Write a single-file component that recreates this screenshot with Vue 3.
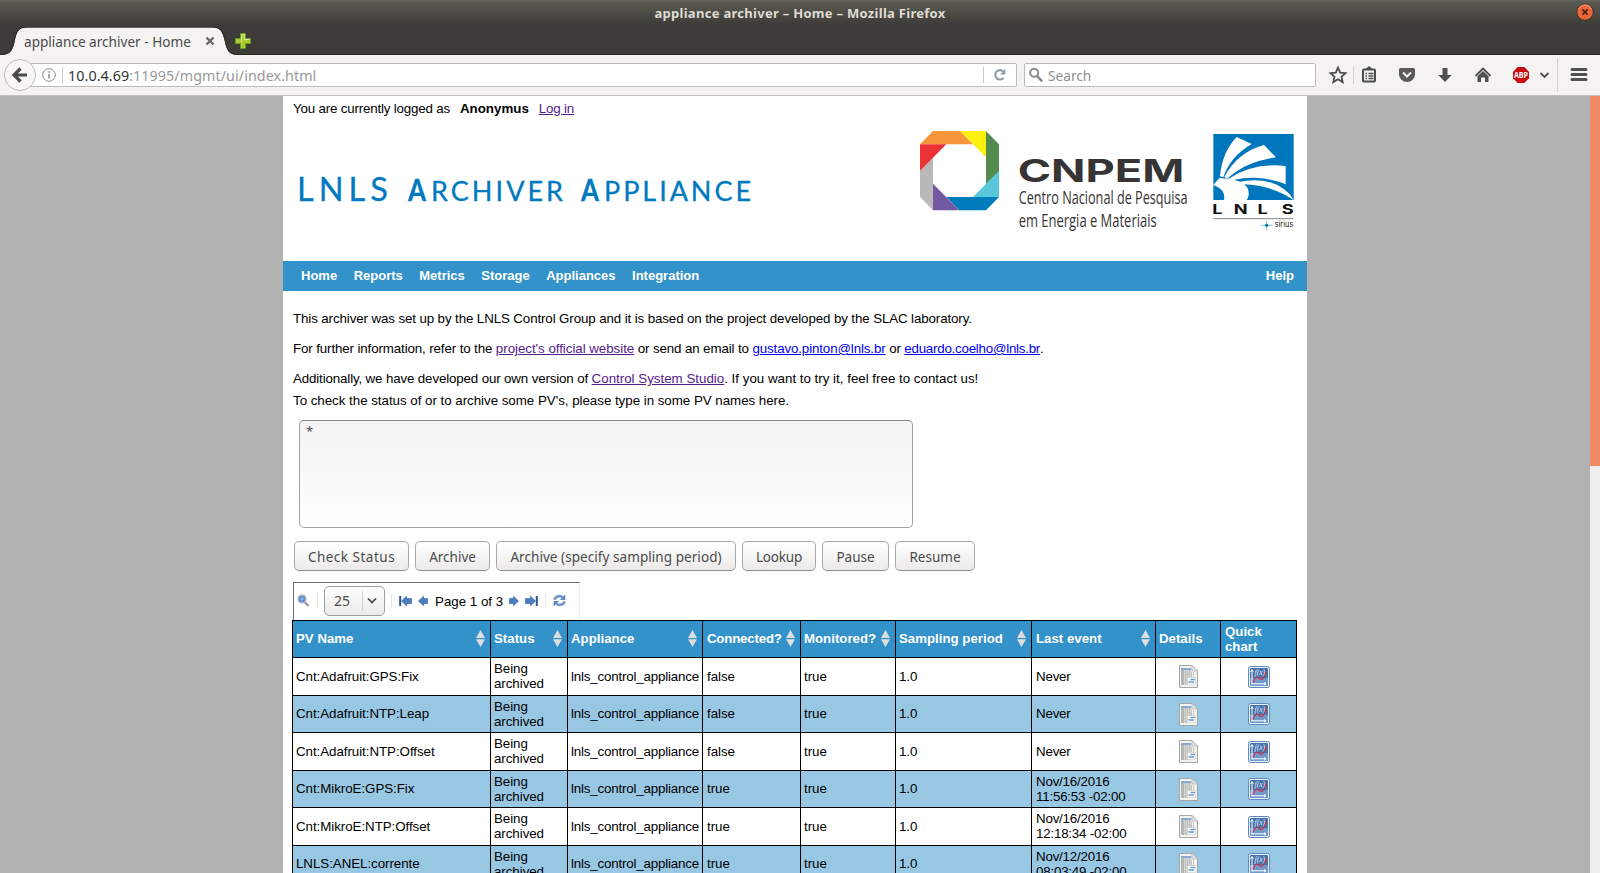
<script setup>
const nav = ['Home', 'Reports', 'Metrics', 'Storage', 'Appliances', 'Integration']
const buttons = [
  { label: 'Check Status', w: 115, ls: 0.5 },
  { label: 'Archive', w: 75, ls: 0 },
  { label: 'Archive (specify sampling period)', w: 240, ls: 0.06 },
  { label: 'Lookup', w: 74, ls: -0.2 },
  { label: 'Pause', w: 67, ls: 0 },
  { label: 'Resume', w: 80, ls: 0 },
]
const columns = ['PV Name', 'Status', 'Appliance', 'Connected?', 'Monitored?', 'Sampling period', 'Last event']
const rows = [
  { pv: 'Cnt:Adafruit:GPS:Fix', connected: 'false', last: 'Never' },
  { pv: 'Cnt:Adafruit:NTP:Leap', connected: 'false', last: 'Never' },
  { pv: 'Cnt:Adafruit:NTP:Offset', connected: 'false', last: 'Never' },
  { pv: 'Cnt:MikroE:GPS:Fix', connected: 'true', last: 'Nov/16/2016 11:56:53 -02:00' },
  { pv: 'Cnt:MikroE:NTP:Offset', connected: 'true', last: 'Nov/16/2016 12:18:34 -02:00' },
  { pv: 'LNLS:ANEL:corrente', connected: 'true', last: 'Nov/12/2016 08:03:49 -02:00' },
]
</script>

<template>
  <div class="window">
    <header class="chrome">
      <div class="titlebar">
        <span class="wintitle">appliance archiver – Home – Mozilla Firefox</span>
        <svg class="winclose" width="20" height="20" viewBox="0 0 20 20">
          <circle cx="10" cy="10" r="8.6" fill="#33312c" />
          <circle cx="10" cy="10" r="7.8" fill="#ec6637" />
          <path d="M3.5 7a7.3 7.3 0 0 1 13 0" fill="none" stroke="#f59b77" stroke-width="1" />
          <path d="M7.4 7.4l5.2 5.2M12.6 7.4l-5.2 5.2" stroke="#3b2119" stroke-width="1.5" />
        </svg>
      </div>
      <div class="tabs">
        <svg class="tabshape" width="250" height="29" viewBox="0 0 250 29">
          <path d="M0 28C10 28 12.500 24 14.500 15C16.500 5 18 0.500 27 0.500H212C221 0.500 223 5 225 15C227 24 229 28 239 28H250V29H0Z" fill="#f4f3f2" />
          <path d="M0 27.500C10 27.500 12 24 14 15C16 5 18 0 27 0H212C221 0 223 5 225.500 15C227.500 24 229 27.500 239 27.500" fill="none" stroke="#262622" />
        </svg>
        <span class="tabtitle">appliance archiver - Home</span>
        <svg class="tabclose" width="10" height="10" viewBox="0 0 10 10"><path d="M1.500 1.500l7 7M8.500 1.500l-7 7" stroke="#666" stroke-width="2.400" /></svg>
        <svg class="newtab" width="18" height="18" viewBox="0 0 18 18">
          <path d="M6.500 1.500h5v5h5v5h-5v5h-5v-5h-5v-5h5z" fill="#a8cb32" stroke="#6b9a20" />
          <path d="M7.500 10V2.500h3v5h5" fill="none" stroke="#d9e88f" />
        </svg>
      </div>
      <div class="toolbar">
        <div class="urlbar">
          <svg class="back" width="34" height="34" viewBox="0 0 34 34">
            <circle cx="17" cy="17" r="15.500" fill="#f8f7f6" stroke="#bdbbb9" />
            <path d="M17.500 10.500L11 17l6.500 6.500M11.500 17H24" fill="none" stroke="#4b4b4b" stroke-width="3.200" />
          </svg>
          <svg class="info" width="14" height="14" viewBox="0 0 14 14">
            <circle cx="7" cy="7" r="6.300" fill="none" stroke="#8b8b8b" />
            <path d="M7 6v4.500M7 3.300v1.500" stroke="#8b8b8b" stroke-width="1.600" />
          </svg>
          <i class="sep url-sep"></i>
          <span class="url"><b>10.0.4.69</b>:11995/mgmt/ui/index.html</span>
          <i class="sep"></i>
          <svg class="reload" width="14" height="14" viewBox="0 0 14 14">
            <path d="M10.600 9.800A4.700 4.700 0 1 1 10.300 3.500" fill="none" stroke="#8c9ba5" stroke-width="2.100" />
            <path d="M12.300 1v5.500H7z" fill="#8c9ba5" />
          </svg>
        </div>
        <div class="search">
          <svg width="16" height="16" viewBox="0 0 16 16"><circle cx="6.200" cy="5.800" r="4" fill="none" stroke="#8c8c8c" stroke-width="2" /><path d="M9 9l5.200 5.300" stroke="#8c8c8c" stroke-width="2.500" /></svg>
          <span>Search</span>
        </div>
        <svg class="tools" width="270" height="40" viewBox="0 0 270 40">
          <g fill="none" stroke="#4c4c4c">
            <path d="M18 12.600l2.200 5 5.300.500-4 3.700 1.200 5.300-4.700-2.800-4.700 2.800 1.200-5.300-4-3.700 5.300-.500z" stroke-width="1.800" />
            <rect x="43" y="14.500" width="12" height="12" rx="1" stroke-width="2" />
            <path d="M45.500 18.500h1.500M48.500 18.500h5M45.500 21h1.500M48.500 21h5M45.500 23.500h1.500M48.500 23.500h5" stroke-width="1.300" />
          </g>
          <path d="M45 14.500l4-3.500 4 3.500z" fill="#4c4c4c" />
          <path d="M79 14.500q0-1.500 1.500-1.500h13q1.500 0 1.500 1.500v5a8 7.500 0 0 1-16 0z" fill="#5a5a5a" />
          <path d="M83 17.500l4 4 4-4" fill="none" stroke="#f4f3f2" stroke-width="2" />
          <path d="M122.500 13h5v7h4.200l-6.700 7-6.700-7h4.200z" fill="#505050" />
          <path d="M155.500 21l7.500-7.500 7.500 7.500" fill="none" stroke="#505050" stroke-width="1.800" />
          <path d="M157.500 21.300l5.500-5.300 5.500 5.300V27H165v-4.500h-4V27h-3.500z" fill="#505050" />
          <path d="M197.700 12h6.600l4.700 4.700v6.600l-4.700 4.700h-6.600l-4.700-4.700v-6.600z" fill="#c70d0d" />
          <text x="201" y="23.300" text-anchor="middle" textLength="14" lengthAdjust="spacingAndGlyphs" fill="#fff" font-family="Open Sans, sans-serif" font-size="8.500" font-weight="700">ABP</text>
          <path d="M220.500 18l4 4 4-4" fill="none" stroke="#505050" stroke-width="1.800" />
          <path d="M33.500 11v18M237.500 3v34" stroke="#d5d3d1" />
          <path d="M252 14.500h14M252 19.500h14M252 24.500h14" stroke="#505050" stroke-width="3" stroke-linecap="round" />
        </svg>
      </div>
    </header>

    <div class="viewport">
      <main class="page">
        <div class="login"><span class="who">You are currently logged as</span><b>Anonymus</b><a class="visited who">Log in</a></div>
        <div class="banner">
          <svg width="480" height="140" viewBox="283 121 480 140" class="apptitle">
            <g fill="#0079c1" stroke="#0079c1" stroke-width=".3" font-family="Lato, sans-serif">
              <text x="297" y="200.500" font-size="32.500" textLength="91">LNLS</text>
              <text x="408" y="200.500" font-size="30" textLength="18" lengthAdjust="spacingAndGlyphs" font-weight="700">A</text>
              <text x="431" y="200.500" font-size="27" textLength="132">RCHIVER</text>
              <text x="581" y="200.500" font-size="30" textLength="18" lengthAdjust="spacingAndGlyphs" font-weight="700">A</text>
              <text x="604" y="200.500" font-size="27" textLength="147">PPLIANCE</text>
            </g>
          </svg>
          <svg width="407" height="140" viewBox="0 18 1221 420">
            <path d="M99 48H180L219 88H60z" fill="#f7963a" />
            <path d="M180 48H258V127z" fill="#fff10f" />
            <path d="M258 48L297 88V170L258 207z" fill="#528a50" />
            <path d="M297 168V247H218z" fill="#59c6dc" />
            <path d="M139 246H297L258 286H178z" fill="#007cba" />
            <path d="M99 206L178 286H99z" fill="#7159a4" />
            <path d="M60 166L99 127V286L60 246z" fill="#bab9b7" />
            <path d="M60 88H139L60 167z" fill="#ed3237" />
            <text x="353" y="201" font-family="Inter, sans-serif" font-weight="700" font-size="95" textLength="500" lengthAdjust="spacingAndGlyphs" fill="#373435">CNPEM</text>
            <g font-family="Open Sans, sans-serif" font-size="53" fill="#373435">
              <text x="356" y="266" textLength="507" lengthAdjust="spacingAndGlyphs">Centro Nacional de Pesquisa</text>
              <text x="356" y="337" textLength="414" lengthAdjust="spacingAndGlyphs">em Energia e Materiais</text>
            </g>
            <rect x="940" y="57" width="241" height="198" fill="#0077bd" />
            <g fill="#fff">
              <path d="M1010 66L1055 87Q990 125 970 187L960 184Q966 112 1010 66z" />
              <path d="M1092 90L1128 127Q1036 140 982 191L973 186Q1012 112 1092 90z" />
              <path d="M1157 153V208Q1080 176 1000 195L985 192Q1060 142 1157 153z" />
              <path d="M1010 202Q1100 184 1150 221Q1172 236 1180 255Q1120 212 1030 208z" />
              <path d="M940 210L958 189Q1030 192 1044 222Q1050 241 1040 255H972Q978 224 940 210z" />
            </g>
            <g transform="scale(1.4 1)" font-family="Inter, sans-serif" font-weight="700" font-size="39" fill="#111">
              <text x="669 715 766 818" y="297">LNLS</text>
            </g>
            <path d="M940 311H1180" stroke="#888" stroke-width="3" />
            <path d="M1083 331H1118M1100 318V345" stroke="#8bc1e2" stroke-width="3" />
            <circle cx="1100" cy="331" r="5" fill="#0077bd" />
            <text x="1124" y="337" font-family="Inter, sans-serif" font-size="23" textLength="56" lengthAdjust="spacingAndGlyphs" fill="#222">sirius</text>
          </svg>
        </div>
        <nav class="menu">
          <a v-for="n in nav" :key="n">{{ n }}</a>
          <a class="help">Help</a>
        </nav>
        <section class="content">
          <p class="t1">This archiver was set up by the LNLS Control Group and it is based on the project developed by the SLAC laboratory.</p>
          <p class="t2">For further information, refer to the <a class="visited official">project's official website</a> or send an email to <a class="fresh">gustavo.pinton@lnls.br</a> or <a class="fresh coelho">eduardo.coelho@lnls.br</a>.</p>
          <p class="tight"><span class="t3">Additionally, we have developed our own version of </span><a class="visited">Control System Studio</a>. If you want to try it, feel free to contact us!</p>
          <p class="prompt">To check the status of or to archive some PV's, please type in some PV names here.</p>
          <div class="area">*</div>
          <div class="buttons">
            <div v-for="b in buttons" :key="b.label" class="btn" :style="{ width: b.w + 'px', letterSpacing: b.ls + 'px' }">{{ b.label }}</div>
          </div>
          <div class="pager">
            <svg class="mag" width="13" height="13" viewBox="0 0 13 13"><path d="M7.500 8l4 4" stroke="#9a9a9a" stroke-width="2.400" /><circle cx="5" cy="5" r="4" fill="#5b8fd2" stroke="#b9bcc2" stroke-width="1.400" /><path d="M3 5h4M5 3v4" stroke="#90b6e6" /></svg>
            <i class="psep s1"></i>
            <div class="select"><span>25</span><i></i><svg width="12" height="8" viewBox="0 0 12 8"><path d="M2 1.500l4 4 4-4" fill="none" stroke="#444" stroke-width="1.700" /></svg></div>
            <i class="psep s2"></i>
            <svg class="first" width="13" height="12" viewBox="0 0 13 12"><path d="M1.200 1v10" stroke="#2b5797" stroke-width="2" /><path d="M2.500 6l5-4.800v2.300h5v5h-5v2.300z" fill="#4a7dc0" stroke="#2e5f9f" stroke-width=".6" /></svg>
            <svg class="prev" width="10" height="12" viewBox="0 0 10 12"><path d="M.5 6l5-4.800v2.300h4v5h-4v2.300z" fill="#4a7dc0" stroke="#2e5f9f" stroke-width=".6" /></svg>
            <span class="pageno">Page 1 of 3</span>
            <svg class="next" width="10" height="12" viewBox="0 0 10 12"><path d="M9.500 6l-5-4.800v2.300h-4v5h4v2.300z" fill="#4a7dc0" stroke="#2e5f9f" stroke-width=".6" /></svg>
            <svg class="last" width="13" height="12" viewBox="0 0 13 12"><path d="M11.800 1v10" stroke="#2b5797" stroke-width="2" /><path d="M10.500 6l-5-4.800v2.300h-5v5h5v2.300z" fill="#4a7dc0" stroke="#2e5f9f" stroke-width=".6" /></svg>
            <i class="psep s3"></i>
            <svg class="refresh" width="13" height="13" viewBox="0 0 13 13">
              <path d="M1.500 5.800A5 4.300 0 0 1 9.500 3M11.500 7.200A5 4.300 0 0 1 3.500 10" fill="none" stroke="#6f97cb" stroke-width="2.600" />
              <path d="M12.300.500v5.500H6.800zM.7 12.500V7h5.500z" fill="#5a86c0" />
            </svg>
          </div>
          <div class="table">
            <div class="row head">
              <div v-for="c in columns" :key="c" class="cell">
                <span>{{ c }}</span>
                <svg class="sort" width="9" height="17" viewBox="0 0 9 17"><path d="M4.500 0L9 8H0zM0 9.300h9L4.500 17z" fill="#dedede" /></svg>
              </div>
              <div class="cell"><span>Details</span></div>
              <div class="cell"><span class="narrow">Quick chart</span></div>
            </div>
            <div v-for="r in rows" :key="r.pv" class="row">
              <div class="cell">{{ r.pv }}</div>
              <div class="cell"><span class="narrow">Being archived</span></div>
              <div class="cell">lnls_control_appliance</div>
              <div class="cell">{{ r.connected }}</div>
              <div class="cell">true</div>
              <div class="cell">1.0</div>
              <div class="cell"><span class="date">{{ r.last }}</span></div>
              <div class="cell icon">
                <svg width="19" height="23" viewBox="0 0 19 23">
                  <path d="M.5 .5H13L18.500 6V22.500H.5z" fill="#f2f2ef" stroke="#a6a7a3" />
                  <path d="M2 3h10.500v2H2z" fill="#8aaad6" />
                  <path d="M2 5h3v15H2z" fill="#b4b6b3" />
                  <path d="M5 5h7.500v8H8v7H5z" fill="#d3d5d2" />
                  <path d="M6.500 5v15M8.500 5v15M10.500 5v8M12.500 7v6M14.500 7v6" stroke="#b9bbb8" stroke-width=".8" />
                  <path d="M13 .5V6h5.500z" fill="#e2e2e0" stroke="#b7b8b5" stroke-width=".7" />
                  <path d="M8.500 12.500h8v7h-8z" fill="#fafbfb" stroke="#c4c6c4" stroke-dasharray="1 1" />
                  <path d="M11.500 14.500H16M9.500 17H15" stroke="#6d9bd3" stroke-width="1.700" />
                </svg>
              </div>
              <div class="cell icon">
                <svg width="22" height="22" viewBox="0 0 22 22">
                  <rect x=".5" y=".5" width="21" height="21" rx="2" fill="#e9f1fa" stroke="#6289bd" />
                  <rect x="2" y="2" width="18" height="18" rx="1" fill="#4672ac" />
                  <path d="M2 12h18v8H2z" fill="#7199ca" />
                  <path d="M4 18.500V4M2.700 5.800L4 3.500l1.300 2.300M3.500 17.800H18M16 16.500l2 1.300-2 1.300" fill="none" stroke="#fff" stroke-width="1" />
                  <path d="M5 16.500C7.500 10.500 9 10 11.500 12.500S15.500 13 18.500 5" fill="none" stroke="#cf3044" stroke-width="1.200" />
                  <text x="6.500" y="8.500" font-family="Liberation Serif, serif" font-style="italic" font-size="7.500" fill="#e8f0fa" textLength="10.500">f(x)</text>
                </svg>
              </div>
            </div>
          </div>
        </section>
      </main>
      <div class="scroll"><div class="thumb"></div></div>
    </div>
  </div>
</template>

<style>
html, body { overflow: hidden; }
</style>

<style scoped>
.window { width: 1600px; height: 873px; overflow: hidden; font-family: "Liberation Sans", Arial, sans-serif; font-size: 13.33px; color: #000; display: flex; flex-direction: column; }
.chrome { height: 96px; flex: none; font-family: "Noto Sans", "Open Sans", sans-serif; background: linear-gradient(#65635a 0, #5b5a52 2px, #3c3b37 25px, #3c3b37 55px); }
.titlebar { height: 27px; position: relative; text-align: center; }
.wintitle { color: #dfdbd2; font-weight: 700; font-size: 13px; letter-spacing: .29px; line-height: 26px; }
.winclose { position: absolute; right: 5px; top: 2px; }
.tabs { height: 28px; position: relative; box-shadow: inset 0 -1px #262622; }
.tabshape { position: absolute; left: 0; top: 0; }
.tabtitle { position: absolute; left: 24px; top: 5px; line-height: 20px; font-size: 13.600px; color: #4c4c4c; white-space: nowrap; }
.tabclose { position: absolute; left: 205px; top: 9px; }
.newtab { position: absolute; left: 234px; top: 5px; }
.toolbar { height: 41px; box-sizing: border-box; background: #f4f3f2; border-bottom: 1px solid #c2c0be; display: flex; align-items: flex-start; }
.urlbar { margin: 8px 0 0 20px; width: 997px; height: 24px; box-sizing: border-box; border: 1px solid #bdbbb9; border-radius: 2px; background: #fff; display: flex; align-items: center; position: relative; }
.back { position: absolute; left: -18px; top: -6px; }
.info { margin-left: 21px; }
.sep { width: 1px; height: 16px; background: #c8c8c8; }
.url-sep { margin: 0 5px 0 6px; }
.url { flex: 1; font-size: 14.300px; line-height: 20px; padding-top: 2px; color: #999; letter-spacing: .07px; }
.url b { font-weight: 400; color: #333; }
.reload { margin: 0 9px; }
.search { margin: 8px 0 0 7px; width: 292px; height: 24px; box-sizing: border-box; border: 1px solid #bdbbb9; border-radius: 2px; background: #fff; display: flex; align-items: center; color: #8f8f8f; font-size: 13.700px; }
.search svg { margin: 0 4px 0 3px; }
.search span { line-height: 20px; padding-top: 2px; }
.tools { margin-left: 4px; }
.viewport { height: 777px; background: #b2b2b2; display: flex; }
.page { margin-left: 283px; width: 1024px; background: #fff; }
.login { height: 25px; padding: 4px 10px 0; box-sizing: border-box; line-height: 18px; display: flex; gap: 10px; }
.who { letter-spacing: -.18px; }
.visited { color: #551a8b; text-decoration: underline; }
.fresh { color: #0000ee; text-decoration: underline; }
.banner { height: 140px; display: flex; justify-content: space-between; }
.menu { height: 30px; background: #3392ca; color: #fff; font-weight: 700; font-size: 13px; line-height: 30px; padding: 0 13px 0 18px; display: flex; gap: 16.5px; }
.help { margin-left: auto; }
.content { padding: 19px 10px 0; }
.content p { margin: 0 0 12px; line-height: 18px; white-space: nowrap; }
.content p.t1 { letter-spacing: -.112px; }
.content p.t2 { letter-spacing: -.12px; }
.official { letter-spacing: -.04px; }
.coelho { letter-spacing: -.24px; }
.t3 { letter-spacing: -.14px; }
.content p.tight { margin-bottom: 4px; }
.content p.prompt { margin-bottom: 10px; letter-spacing: -.025px; }
.area { margin-left: 6px; width: 614px; height: 108px; box-sizing: border-box; border: 1px solid #a3a3a3; border-top-color: #868686; border-radius: 5px; background: linear-gradient(#f3f3f3, #fff); padding: 2px 6px; font: 13px/16px "Noto Sans", sans-serif; color: #4c4c4c; }
.buttons { display: flex; gap: 6px; margin: 13px 0 11px 1px; }
.btn { height: 30px; box-sizing: border-box; border: 1px solid #aaa; border-bottom-color: #8f8f8f; border-radius: 5px; background: linear-gradient(#fff, #ebeae9); text-align: center; font: 13.500px/30px "Noto Sans", sans-serif; color: #4c4c4c; white-space: nowrap; }
.pager { width: 287px; height: 38px; box-sizing: border-box; border-top: 1px solid #6c6c6c; border-left: 1px solid #6c6c6c; border-right: 1px solid #eee; padding-bottom: 2px; display: flex; align-items: center; }
.psep { width: 1px; height: 13px; background: #e4e4e4; }
.mag { margin-left: 3px; }
.s1 { margin: 0 6px 0 7px; }
.select { width: 61px; height: 30px; box-sizing: border-box; border: 1px solid #9d9d9d; border-radius: 5px; background: linear-gradient(#fff, #ebeae9); display: flex; align-items: center; padding-left: 9px; font: 14px/28px "Noto Sans", sans-serif; color: #4c4c4c; }
.select i { width: 1px; height: 20px; background: #ccc; margin: 0 3px 0 12px; }
.s2 { margin: 0 7px 0 6px; }
.prev { margin: 0 7px 0 6px; }
.next { margin: 0 6px; }
.s3 { margin: 0 7px; }
.pageno { white-space: nowrap; padding-top: 2px; }
.table { margin-left: -1px; width: 1005px; }
.row { display: grid; grid-template-columns: 198px 77px 135px 98px 95px 136px 124px 65px 77px; height: 38px; }
.row:nth-child(odd) { height: 37px; }
.row:nth-child(odd):not(.head) { background: #98c7e4; }
.row.head { background: #3392ca; color: #fff; font-weight: 700; font-size: 13.200px; }
.cell { border-left: 1px solid #000; border-top: 1px solid #000; padding: 0 0 1px 3px; display: flex; align-items: center; line-height: 15px; position: relative; white-space: nowrap; letter-spacing: -.05px; }
.head .cell { letter-spacing: .04px; }
.cell:nth-child(4), .cell:nth-child(7), .cell:nth-child(9) { padding-left: 4px; }
.row:not(.head) .cell:nth-child(3) { letter-spacing: -.18px; }
.head .cell:nth-child(4) { letter-spacing: -.15px; }
.cell:last-child { border-right: 1px solid #000; }
.narrow { width: 60px; white-space: normal; }
.date { width: 96px; white-space: normal; letter-spacing: -.2px; }
.sort { position: absolute; right: 5px; top: 9px; }
.cell.icon { padding: 0; justify-content: center; }
.scroll { margin-left: auto; width: 10px; background: #f0efee; }
.thumb { height: 370px; background: #ef8a63; }
</style>
